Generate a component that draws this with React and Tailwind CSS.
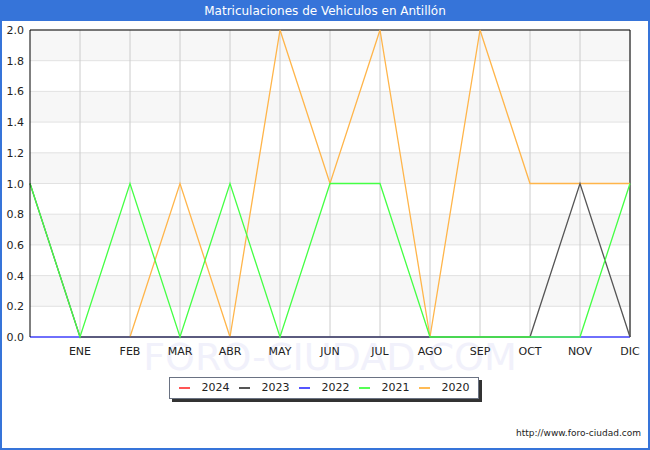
const X = (i) => 30 + i * 50;
const Y = (v) => 337 - v * 153.5;

const series = [
  { color: "#ffb54a", data: [null, null, 0, 1, 0, 2, 1, 2, 0, 2, 1, 1, 1] },
  { color: "#555555", data: [1, 0, 0, 0, 0, 0, 0, 0, 0, 0, 0, 1, 0] },
  { color: "#44ff44", data: [1, 0, 1, 0, 1, 0, 1, 1, 0, 0, 0, 0, 1] },
];
const months = ["ENE", "FEB", "MAR", "ABR", "MAY", "JUN", "JUL", "AGO", "SEP", "OCT", "NOV", "DIC"];
const legend = [
  ["2024", "#ff5555"],
  ["2023", "#555555"],
  ["2022", "#5555ff"],
  ["2021", "#55ff55"],
  ["2020", "#ffbb55"],
];

function pts(data) {
  return data
    .map((v, i) => (v === null ? null : `${X(i)},${Y(v)}`))
    .filter(Boolean)
    .join(" ");
}

export default function App() {
  return (
    <div className="w-[650px] h-[450px] bg-white border-2 border-t-0 border-[#3674d9] flex flex-col" style={{ fontFamily: "'DejaVu Sans', sans-serif" }}>
      <div className="h-[21px] bg-[#3674d9] text-white text-[12px] flex items-center justify-center -mx-[2px]">
        Matriculaciones de Vehiculos en Antillón
      </div>
      <div className="relative h-[356px]">
        <svg width="646" height="356" viewBox="2 21 646 356" className="absolute left-0 top-0">
          {[1, 3, 5, 7, 9].map((k) => (
            <rect key={k} x={30} y={Y((k + 1) * 0.2)} width={600} height={30.7} fill="#f7f7f7" />
          ))}
          {[...Array(11)].map((_, k) => (
            <line key={"h" + k} x1={30} x2={630} y1={Y(k * 0.2)} y2={Y(k * 0.2)} stroke="#e2e2e2" />
          ))}
          {months.map((m, i) => (
            <line key={"v" + m} x1={X(i + 1)} x2={X(i + 1)} y1={30} y2={337} stroke="#cccccc" />
          ))}
          <text x={330} y={370} textAnchor="middle" fontSize="38" fill="#f1f1fb" fontFamily="DejaVu Sans">FORO-CIUDAD.COM</text>
          <line x1={30} x2={630} y1={30} y2={30} stroke="#000" />
          <line x1={630} x2={630} y1={30} y2={337} stroke="#000" />
          <line x1={30} x2={630} y1={337} y2={337} stroke="#4444ff" strokeWidth="1.5" />
          {series.map((s) => (
            <polyline key={s.color} points={pts(s.data)} fill="none" stroke={s.color} strokeWidth="1.3" />
          ))}
          <line x1={30} x2={30} y1={30} y2={337} stroke="#000" />
          {[...Array(11)].map((_, k) => (
            <text key={"y" + k} x={24} y={Y(k * 0.2) + 4} textAnchor="end" fontSize="11" fill="#222">{(k * 0.2).toFixed(1)}</text>
          ))}
          {months.map((m, i) => (
            <text key={"t" + m} x={X(i + 1)} y={355} textAnchor="middle" fontSize="11" fill="#222">{m}</text>
          ))}
        </svg>
      </div>
      <div className="flex justify-center">
        <div className="ml-[-2px] w-[310px] h-[22px] border border-gray-500 shadow-[3px_3px_0_#333] flex items-center justify-around px-1 text-[11px] text-[#222]">
          {legend.map(([y, c]) => (
            <div key={y} className="flex items-center gap-3">
              <span className="w-[11px] h-[2px]" style={{ background: c }} />
              <span>{y}</span>
            </div>
          ))}
        </div>
      </div>
      <div className="mt-auto mb-[8px] mr-[7px] text-right text-[9px] text-[#222]">http://www.foro-ciudad.com</div>
    </div>
  );
}
